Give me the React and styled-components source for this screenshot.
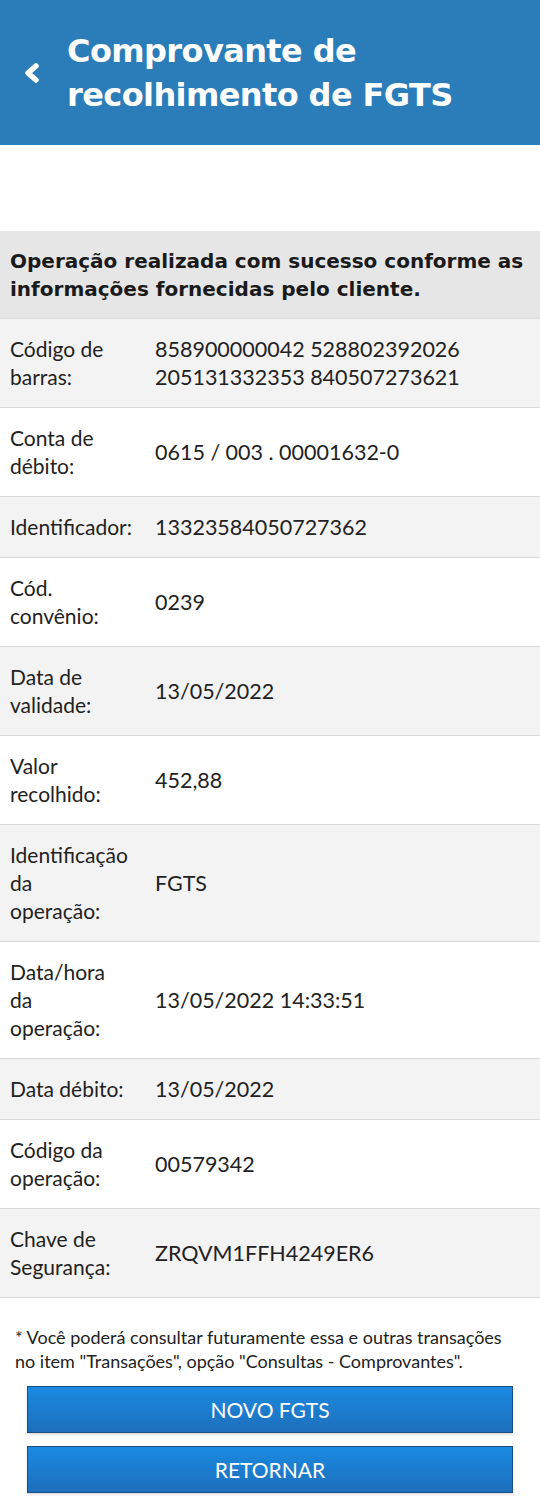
import React from "react";
import styled, { createGlobalStyle } from "styled-components";

const GlobalStyle = createGlobalStyle`
  body {
    margin: 0;
    background: #fff;
    font-family: Lato, "Liberation Sans", sans-serif;
    color: #222;
  }
`;

const rows = [
  { label: ["Código de", "barras:"], value: ["858900000042 528802392026", "205131332353 840507273621"] },
  { label: ["Conta de", "débito:"], value: ["0615 / 003 . 00001632-0"] },
  { label: ["Identificador:"], value: ["13323584050727362"] },
  { label: ["Cód.", "convênio:"], value: ["0239"] },
  { label: ["Data de", "validade:"], value: ["13/05/2022"] },
  { label: ["Valor", "recolhido:"], value: ["452,88"] },
  { label: ["Identificação", "da", "operação:"], value: ["FGTS"] },
  { label: ["Data/hora", "da", "operação:"], value: ["13/05/2022 14:33:51"] },
  { label: ["Data débito:"], value: ["13/05/2022"] },
  { label: ["Código da", "operação:"], value: ["00579342"] },
  { label: ["Chave de", "Segurança:"], value: ["ZRQVM1FFH4249ER6"] },
];

function App() {
  return (
    <Page>
      <GlobalStyle />
      <Header>
        <BackButton aria-label="voltar">
          <svg width="20" height="24" viewBox="0 0 20 24">
            <path d="M14 5 L6 12 L14 19" fill="none" stroke="#fff" strokeWidth="5.5" strokeLinecap="round" strokeLinejoin="round" />
          </svg>
        </BackButton>
        <Title>Comprovante de recolhimento de FGTS</Title>
      </Header>

      <Content>
        <Message>Operação realizada com sucesso conforme as informações fornecidas pelo cliente.</Message>
        {rows.map((r, i) => (
          <Row key={r.label.join(" ")} $shaded={i % 2 === 0}>
            <Label>
              {r.label.map((l) => (
                <div key={l}>{l}</div>
              ))}
            </Label>
            <Value>
              {r.value.map((v) => (
                <div key={v}>{v}</div>
              ))}
            </Value>
          </Row>
        ))}
      </Content>

      <Note>
        * Você poderá consultar futuramente essa e outras transações no item "Transações", opção "Consultas - Comprovantes".
      </Note>
      <Actions>
        <ActionButton>NOVO FGTS</ActionButton>
        <ActionButton>RETORNAR</ActionButton>
      </Actions>
    </Page>
  );
}

export default App;

const Page = styled.div`
  width: 540px;
  min-height: 1503px;
  background: #fff;
`;

const Header = styled.header`
  background: #2a7db8;
  height: 145px;
  display: flex;
  align-items: center;
  padding: 0 0 0 22px;
  box-sizing: border-box;
`;

const BackButton = styled.button`
  background: none;
  border: none;
  padding: 0;
  width: 45px;
  display: flex;
  align-items: center;
  cursor: pointer;
`;

const Title = styled.h1`
  margin: 0;
  color: #fff;
  font-family: "DejaVu Sans", sans-serif;
  font-size: 32px;
  font-weight: 700;
  letter-spacing: -0.6px;
  line-height: 44px;
  width: 440px;
`;

const Content = styled.section`
  margin-top: 86px;
`;

const Message = styled.div`
  background: #e6e6e6;
  padding: 16px 10px 15px;
  font-family: "DejaVu Sans", sans-serif;
  font-size: 20px;
  font-weight: 700;
  line-height: 28px;
  color: #1a1a1a;
  border-bottom: 1px solid #dcdcdc;
`;

const Row = styled.div`
  display: flex;
  align-items: center;
  padding: 16px 10px;
  background: ${(p) => (p.$shaded ? "#f4f3f4" : "#fff")};
  border-bottom: 1px solid #d8d8d8;
  font-size: 21px;
  line-height: 28px;
  color: #222;
`;

const Label = styled.div`
  width: 145px;
  flex-shrink: 0;
`;

const Value = styled.div`
  flex: 1;
  font-size: 21.5px;
`;

const Note = styled.p`
  margin: 27px 15px 0;
  font-size: 18px;
  line-height: 24px;
  color: #222;
`;

const Actions = styled.div`
  display: flex;
  flex-direction: column;
  gap: 13px;
  padding: 13px 27px 0;
`;

const ActionButton = styled.button`
  height: 47px;
  border: 1px solid #1c4d80;
  background: linear-gradient(#1a8ae0, #1e6fbc);
  color: #fff;
  font-family: inherit;
  font-size: 21px;
  cursor: pointer;
  box-shadow: 0 2px 2px rgba(0, 0, 0, 0.12);
`;
